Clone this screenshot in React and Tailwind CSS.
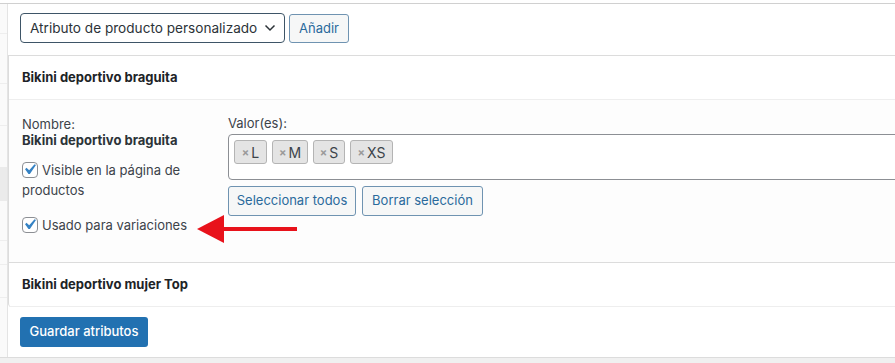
import React from 'react';

const font = { fontFamily: 'Inter, "Noto Sans", sans-serif' };

const Checkbox = () => (
  <span className="relative inline-block align-[-3px] w-[16px] h-[16px] mr-[4px] rounded-[4px] border border-[#8c8f94] bg-white">
    <svg className="absolute left-[-4px] top-[-4px] w-[21px] h-[21px]" viewBox="0 0 20 20">
      <path d="M14.83 4.89l1.34.94-5.81 8.38H9.02L5.78 9.67l1.34-1.25 2.57 2.4z" fill="#3582c4" />
    </svg>
  </span>
);

const Tag = ({ label, width }) => (
  <span className={`flex items-center justify-center h-[24px] ${width} rounded-[3px] border border-[#b4b4b4] bg-[#e4e4e4] text-[14px] text-[#3c434a]`}>
    <span className="text-[11px] font-bold text-[#9a9a9a] mr-[2px]">×</span>
    {label}
  </span>
);

const SecondaryButton = ({ children, width }) => (
  <button className={`${width} h-[30px] rounded-[3px] border border-[#6f93b1] bg-[#f6f7f7] text-[13px] text-[#2a6a9c]`}>
    {children}
  </button>
);

const App = () => {
  return (
    <div style={font} className="relative w-[895px] h-[363px] overflow-hidden bg-white flex flex-col">
      <div className="h-[3px] shrink-0" />
      <div className="flex flex-1 border-t border-[#d0d0d0]">
        {/* product data tabs, cut off at the left */}
        <div className="w-[8px] shrink-0 flex flex-col bg-[#fafafa] border-r border-[#e4e4e4]">
          <div className="h-[30px] border-b border-[#eee]" />
          <div className="h-[50px] border-b border-[#eee]" />
          <div className="h-[42px] border-b border-[#eee]" />
          <div className="h-[41px]" />
          <div className="h-[34px] bg-[#ebebeb]" />
          <div className="h-[40px] border-b border-[#eee]" />
          <div className="h-[24px] border-b border-[#eee]" />
          <div className="h-[33px] border-b border-[#eee]" />
          <div className="flex-1" />
        </div>

        <div className="flex-1 flex flex-col">
          {/* toolbar */}
          <div className="h-[51px] shrink-0 flex items-start gap-[4px] pl-[12px] pt-[9px]">
            <div className="w-[265px] h-[30px] flex items-center justify-between pl-[9px] pr-[8px] rounded-[4px] border border-[#3e5567] text-[13.6px] text-[#2c3338] whitespace-nowrap">
              <span>Atributo de producto personalizado</span>
              <svg className="shrink-0" width="12" height="8" viewBox="0 0 12 8">
                <path d="M1.5 1.5 6 6l4.5-4.5" fill="none" stroke="#2c3338" strokeWidth="1.5" />
              </svg>
            </div>
            <button className="w-[60px] h-[29px] mt-[1px] rounded-[3px] border border-[#6f93b1] bg-[#f6f7f7] text-[13px] text-[#2a6a9c]">
              Añadir
            </button>
          </div>

          {/* attributes */}
          <div className="shrink-0 border-t border-l border-[#dcdcdc] rounded-bl-[4px] border-b-0">
            <div className="h-[44px] flex items-center pl-[13px] border-b border-[#eee] text-[13px] font-bold text-[#1d2327]">
              Bikini deportivo braguita
            </div>
            <div className="h-[163px] flex bg-[#fdfdfd] border-b border-[#dcdcdc]">
              <div className="w-[219px] shrink-0 pl-[13px] pr-[16px] pt-[16px] text-[13px] text-[#3c434a]">
                <div className="leading-[16px]">Nombre:</div>
                <div className="leading-[16px] font-bold text-[#2c3338]">Bikini deportivo braguita</div>
                <div className="mt-[12px] leading-[20px]">
                  <Checkbox />
                  Visible en la página de productos
                </div>
                <div className="mt-[15px] leading-[20px]">
                  <Checkbox />
                  Usado para variaciones
                </div>
              </div>
              <div className="flex-1 pt-[15px] text-[13px] text-[#3c434a]">
                <div className="leading-[16px]">Valor(es):</div>
                <div className="mt-[3px] h-[46px] w-[700px] rounded-l-[4px] border border-[#8c8f94] bg-white flex items-start gap-[5px] pl-[5px] pt-[5px]">
                  <Tag label="L" width="w-[33px]" />
                  <Tag label="M" width="w-[36px]" />
                  <Tag label="S" width="w-[32px]" />
                  <Tag label="XS" width="w-[43px]" />
                </div>
                <div className="mt-[6px] flex gap-[6px]">
                  <SecondaryButton width="w-[128px]">Seleccionar todos</SecondaryButton>
                  <SecondaryButton width="w-[121px]">Borrar selección</SecondaryButton>
                </div>
              </div>
            </div>
            <div className="h-[44px] flex items-center pl-[13px] border-b border-[#eee] text-[13px] font-bold text-[#1d2327]">
              Bikini deportivo mujer Top
            </div>
          </div>

          {/* footer */}
          <div className="h-[49px] shrink-0 pl-[12px] pt-[10px]">
            <button className="w-[128px] h-[30px] rounded-[3px] bg-[#2271b1] text-[13px] font-medium text-white">
              Guardar atributos
            </button>
          </div>
        </div>
      </div>
      <div className="h-[6px] shrink-0 border-t border-[#dcdcdc] bg-[#f0f0f0]" />

      {/* annotation arrow */}
      <svg className="absolute left-[190px] top-[210px]" width="112" height="36" viewBox="0 0 112 36">
        <polygon points="7,19 34,5 34,33" fill="#e8121b" />
        <rect x="32" y="17" width="75" height="4" fill="#e8121b" />
      </svg>
    </div>
  );
};

export default App;
